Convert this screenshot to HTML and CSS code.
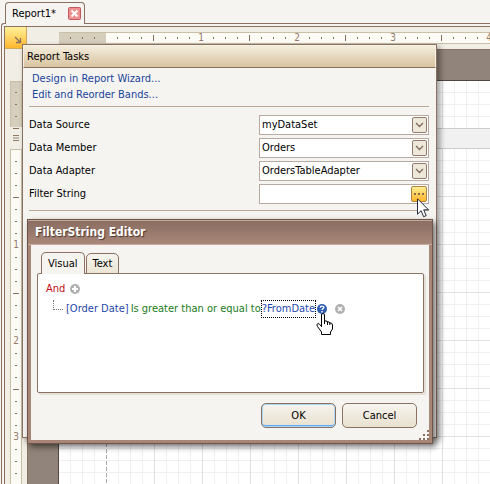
FILE: index.html
```html
<!DOCTYPE html>
<html lang="en">
<head>
<meta charset="utf-8">
<title>Report Designer</title>
<link rel="stylesheet" href="styles.css">
</head>
<body>
<div class="designer">
  <div class="doc-tabs">
    <div class="doc-tab">
      <span>Report1*</span>
      <button class="close" type="button" aria-label="Close"><svg width="13" height="13" viewBox="0 0 13 13"><rect x=".5" y=".5" width="12" height="12" rx="1" fill="#f08f8f" stroke="#bd5c5c"/><path d="M3.500 3.500l6 6M9.500 3.500l-6 6" stroke="#fff" stroke-width="2"/></svg></button>
    </div>
  </div>
  <div class="frame">
    <div class="surface">
      <button class="corner" type="button" aria-label="Report tasks"><svg width="8" height="8" viewBox="0 0 8 8"><path d="M1 1l5 5M2 6.500h4.500V2" fill="none" stroke="#8b7161" stroke-width="1.300"/></svg></button>
      <div class="h-ruler">
        <div class="h-margin"></div>
        <div class="h-track"><i></i><span>1</span><span>2</span><span>3</span><span>4</span></div>
      </div>
      <div class="v-ruler">
        <div class="v-margin"></div>
        <div class="v-grip"><svg width="6" height="6" viewBox="0 0 6 6"><path d="M0 .5h6M0 3h6M0 5.500h6" stroke="#927a6c"/></svg></div>
        <div class="v-track"><i></i><span>1</span><span>2</span><span>3</span></div>
      </div>
      <div class="workspace">
        <div class="page">
          <div class="band grid-lines"></div>
          <div class="band-caption"></div>
          <div class="detail grid-lines"></div>
        </div>
      </div>
    </div>
  </div>
</div>

<section class="tasks">
  <h2>Report Tasks</h2>
  <div class="tasks-body">
    <nav><a href="#">Design in Report Wizard...</a><a href="#">Edit and Reorder Bands...</a></nav>
    <form class="fields">
      <label for="source">Data Source</label>
      <div class="combo"><select id="source"><option>myDataSet</option></select><svg width="15" height="16" viewBox="0 0 15 16"><use href="#drop"/></svg></div>
      <label for="member">Data Member</label>
      <div class="combo"><select id="member"><option>Orders</option></select><svg width="15" height="16" viewBox="0 0 15 16"><use href="#drop"/></svg></div>
      <label for="adapter">Data Adapter</label>
      <div class="combo"><select id="adapter"><option>OrdersTableAdapter</option></select><svg width="15" height="16" viewBox="0 0 15 16"><use href="#drop"/></svg></div>
      <label for="filter">Filter String</label>
      <div class="combo"><input id="filter" type="text"><button class="dots" type="button" aria-label="Edit filter"><svg width="10" height="2" viewBox="0 0 10 2"><path d="M0 0h2v2H0zM4 0h2v2H4zM8 0h2v2H8z" fill="#8b6a45"/></svg></button></div>
    </form>
  </div>
</section>

<section class="editor">
  <h2>FilterString Editor</h2>
  <div class="editor-body">
    <div class="tabs" role="tablist"><button class="tab active" type="button" role="tab">Visual</button><button class="tab" type="button" role="tab">Text</button></div>
    <div class="tree">
      <div class="root"><span class="and">And</span><svg width="10" height="10" viewBox="0 0 10 10"><circle cx="5" cy="5" r="5" fill="#b0b0b0"/><path d="M5 2v6M2 5h6" stroke="#fff" stroke-width="2"/></svg></div>
      <div class="node">
        <i class="branch"></i><span class="field">[Order Date]</span><span class="op">Is greater than or equal to</span><span class="value">?FromDate</span>
        <svg class="help" width="10" height="10" viewBox="0 0 10 10"><circle cx="5" cy="5" r="5" fill="#2f5cae"/><path d="M3.200 3.700C3.200 1.600 6.800 1.600 6.800 3.600 6.800 4.800 5 4.700 5 6M5 7v1.400" fill="none" stroke="#fff" stroke-width="1.400"/></svg>
        <svg class="remove" width="10" height="10" viewBox="0 0 10 10"><circle cx="5" cy="5" r="5" fill="#b0b0b0"/><path d="M3 3l4 4M7 3l-4 4" stroke="#fff" stroke-width="1.700"/></svg>
      </div>
    </div>
    <div class="actions"><button class="action ok" type="button">OK</button><button class="action" type="button">Cancel</button></div>
  </div>
  <svg class="size-grip" width="10" height="10" viewBox="0 0 10 10"><path d="M8 0h2v2H8zM4 4h2v2H4zM8 4h2v2H8zM0 8h2v2H0zM4 8h2v2H4zM8 8h2v2H8z" fill="#8b7161"/></svg>
</section>

<svg class="pointer" width="12" height="20" viewBox="0 0 12 20"><path d="M.5.8v15.400l3.600-3.500 2.500 6 2.600-1.100-2.500-5.800h4.800z" fill="#fff" stroke="#222b3c"/></svg>
<svg class="hand" width="17" height="22" viewBox="0 0 17 22"><path d="M5.500 14V2q0-1.500 1.500-1.500T8.500 2v6q2.500-.8 2.500 1 2.500-.8 2.500 1 3-.5 3 2v4l-2 3v2.500h-9V19l-4-5.500q-1.500-2.500.5-3 1.500 0 3.500 3z" fill="#fff" stroke="#000"/><path d="M8.500 7v4M11.500 8.500V12M13.800 9.500V12" stroke="#000"/></svg>
<svg width="0" height="0" class="defs"><defs><g id="drop"><rect x=".5" y=".5" width="14" height="15" rx="1.500" fill="#eee8da" stroke="#927a6c"/><path d="M4 6l3.500 3.500L11 6" fill="none" stroke="#826a5c" stroke-width="1.300"/></g></defs></svg>
</body>
</html>
```
FILE: styles.css
```css
* { box-sizing: border-box; }
:root { --line: #8b7161; --paper: #f6f4f0; --edge: #c8bfa6; }
body { margin: 0; overflow: hidden; background: var(--paper); color: #000; font: 11px/16px "DejaVu Sans Condensed", "Noto Sans", sans-serif; }
button, input, select { font: inherit; color: inherit; margin: 0; padding: 0; }
h2 { margin: 0; }
svg { display: block; flex: none; }
i { display: block; flex: none; }

/* Document tabs and designer frame */
.designer { height: 100vh; display: flex; flex-direction: column; }
.doc-tabs { display: flex; padding: 2px 0 0 5px; margin-bottom: -1px; z-index: 1; }
.doc-tab { display: flex; align-items: center; gap: 12px; height: 22px; padding: 0 3px 0 6px; border: 1px solid var(--line); border-bottom: 0; border-radius: 4px 4px 0 0; background: var(--paper); }
.close { border: 0; background: none; }
.frame { flex: 1; display: flex; padding: 2px 0 0 2px; margin-left: 1px; border: 1px solid var(--line); border-width: 1px 0 0 1px; border-radius: 3px 0 0 0; }
.surface { flex: 1; min-width: 0; display: grid; grid-template: 22px 1fr / 22px 1fr; border: 1px solid var(--line); border-width: 1px 0 0 1px; background: #f1eee5; }
.corner { display: flex; align-items: center; justify-content: center; padding: 5px 0 0 5px; border: 1px solid #d1a95d; border-width: 0 1px 1px 0; background: linear-gradient(#fff19b, #ffb72e); }

/* Rulers: a tick every 12px, a number every 96px */
.h-ruler { min-width: 0; overflow: hidden; display: flex; height: 12px; margin: 5px 0 0 32px; border: 1px solid var(--edge); border-width: 1px 0; }
.h-margin { flex: none; width: 47px; background: repeating-linear-gradient(90deg, transparent 0 11px, var(--line) 11px 12px) 0 4px / 100% 2px no-repeat #d6cebd; }
.h-track { flex: none; display: flex; line-height: 10px; font-size: 10px; color: #927a6c; background: repeating-linear-gradient(90deg, transparent 0 11px, var(--line) 11px 12px) 0 4px / 100% 2px no-repeat #fdfbf5; }
.h-track i { width: 47px; }
.h-track span { width: 96px; text-align: center; background: linear-gradient(var(--line), var(--line)) 0 2px / 1px 6px no-repeat, linear-gradient(#fdfbf5, #fdfbf5) 50% 0 / 8px 10px no-repeat; }
.v-ruler { overflow: hidden; width: 12px; margin: 32px 0 0 5px; font-size: 10px; color: #927a6c; }
.v-margin { height: 46px; border: 1px solid var(--edge); border-bottom: 0; background: repeating-linear-gradient(transparent 0 10px, var(--line) 10px 11px, transparent 11px 12px) 4px 0 / 2px 100% no-repeat #d6cebd; }
.v-grip { height: 22px; display: grid; place-items: center; background: linear-gradient(var(--line), var(--line)) 3px 1px / 6px 1px no-repeat; }
.v-track { border: 1px solid var(--edge); background: repeating-linear-gradient(transparent 0 11px, var(--line) 11px 12px) 4px 0 / 2px 100% no-repeat #fdfbf5; }
.v-track i { height: 47px; }
.v-track span { display: grid; place-items: center; height: 96px; background: linear-gradient(var(--line), var(--line)) 2px 0 / 6px 1px no-repeat, linear-gradient(#fdfbf5, #fdfbf5) 0 50% / 10px 10px no-repeat; }

/* Report page */
.workspace { min-width: 0; display: flex; padding: 30px 0 0 30px; border: 1px solid #877467; border-width: 1px 0 0 1px; background: #91847a; }
.page { flex: 1; display: flex; flex-direction: column; border: 1px solid #514542; border-width: 1px 0 0 1px; background: #fff; }
.grid-lines { background:
  repeating-linear-gradient(#aaa 0 4px, #fff 4px 6px) 47px 0 / 1px 100% no-repeat,
  repeating-linear-gradient(90deg, transparent 0 47px, #e1e1e1 47px 48px),
  repeating-linear-gradient(transparent 0 47px, #e1e1e1 47px 48px),
  repeating-linear-gradient(90deg, transparent 0 11px, #f0f0f0 11px 12px),
  repeating-linear-gradient(transparent 0 11px, #f0f0f0 11px 12px), #fff; }
.band { height: 47px; }
.band-caption { height: 21px; border: 1px solid #cdcdcd; border-width: 1px 0; background: #f1f1f1; }
.detail { flex: 1; }

/* Report tasks popup */
.tasks { position: absolute; left: 22px; top: 44px; width: 415px; height: 394px; border: 1px solid var(--line); background: var(--paper); box-shadow: 3px 3px 6px rgba(0,0,0,.4); }
.tasks h2 { height: 23px; padding-left: 3px; border: 1px solid #f6f0e3; border-bottom: 1px solid var(--line); background: linear-gradient(#f4eddd, #d8c39f); font-size: 11px; font-weight: 400; line-height: 21px; }
.tasks-body { padding: 3px 7px 0 6px; }
nav { display: flex; flex-direction: column; padding: 0 3px 3px; border-bottom: 1px solid #b9aa96; }
nav a { color: #17449b; text-decoration: none; }
.fields { display: grid; grid-template-columns: 1fr 170px; row-gap: 3px; align-items: center; padding: 8px 0 6px; border-bottom: 1px solid #b9aa96; }
.combo { display: flex; align-items: center; height: 20px; padding-right: 1px; border: 1px solid #b9aaa1; background: #fff; }
.combo select, .combo input { flex: 1; min-width: 0; height: 18px; padding: 0 2px; border: 0; outline: 0; background: none; appearance: none; }
.dots { display: grid; place-items: center; width: 16px; height: 16px; border: 1px solid #ad8341; border-radius: 2px; background: linear-gradient(#ffee94, #ffb52b); }

/* Filter string editor */
.editor { position: absolute; left: 27px; top: 219px; width: 406px; height: 225px; padding: 0 3px 3px; border: 1px solid #6f5449; background: #a78677; box-shadow: 3px 3px 6px rgba(0,0,0,.5); }
.editor h2 { height: 25px; margin: 0 -3px; padding-left: 7px; border-top: 1px solid #c3a99c; border-bottom: 1px solid #c6aca0; background: linear-gradient(#8b6d62, #a78778); color: #fff; font: bold 12px/23px "DejaVu Sans Condensed", sans-serif; text-shadow: 1px 1px 1px #49352e; }
.editor-body { height: 195px; padding: 7px 5px 0 6px; background: var(--paper); }
.tabs { display: flex; align-items: flex-end; gap: 1px; padding-left: 4px; margin-bottom: -1px; }
.tab { height: 21px; padding: 0 6px; border: 1px solid var(--line); border-radius: 5px 5px 0 0; background: linear-gradient(#f6f4f0, #ece5d4); }
.active { height: 22px; border-bottom: 0; background: var(--paper); z-index: 1; }
.tree { height: 120px; padding: 7px 8px; border: 1px solid var(--line); border-radius: 2px; background: #fff; box-shadow: 2px 2px 1px #e5dfd4; }
.root { display: flex; align-items: center; gap: 5px; }
.and { color: #c40d18; }
.node { display: flex; align-items: center; height: 24px; padding-left: 7px; white-space: nowrap; }
.branch { width: 10px; height: 10px; margin: -9px 3px 0 0; border: 1px dotted #777; border-width: 0 0 1px 1px; }
.field, .value { color: #1f48ad; }
.field { margin-right: 2px; }
.op { color: #217b20; }
.value { border: 1px dotted #000; }
.help { margin-left: 1px; }
.remove { margin-left: 8px; }
.actions { display: flex; justify-content: flex-end; gap: 6px; padding: 10px 7px 0 0; }
.action { width: 75px; height: 25px; border: 1px solid var(--line); border-radius: 5px; background: linear-gradient(#f6f4ef, #e9e1cf); }
.ok { box-shadow: inset 0 0 0 1px #a7d8fa, inset 0 -2px 0 #5da9f4; }
.size-grip { position: absolute; right: 3px; bottom: 3px; }

/* Cursors */
.pointer { position: absolute; left: 417px; top: 198px; }
.hand { position: absolute; left: 316px; top: 313px; }
.defs { position: absolute; }
```
